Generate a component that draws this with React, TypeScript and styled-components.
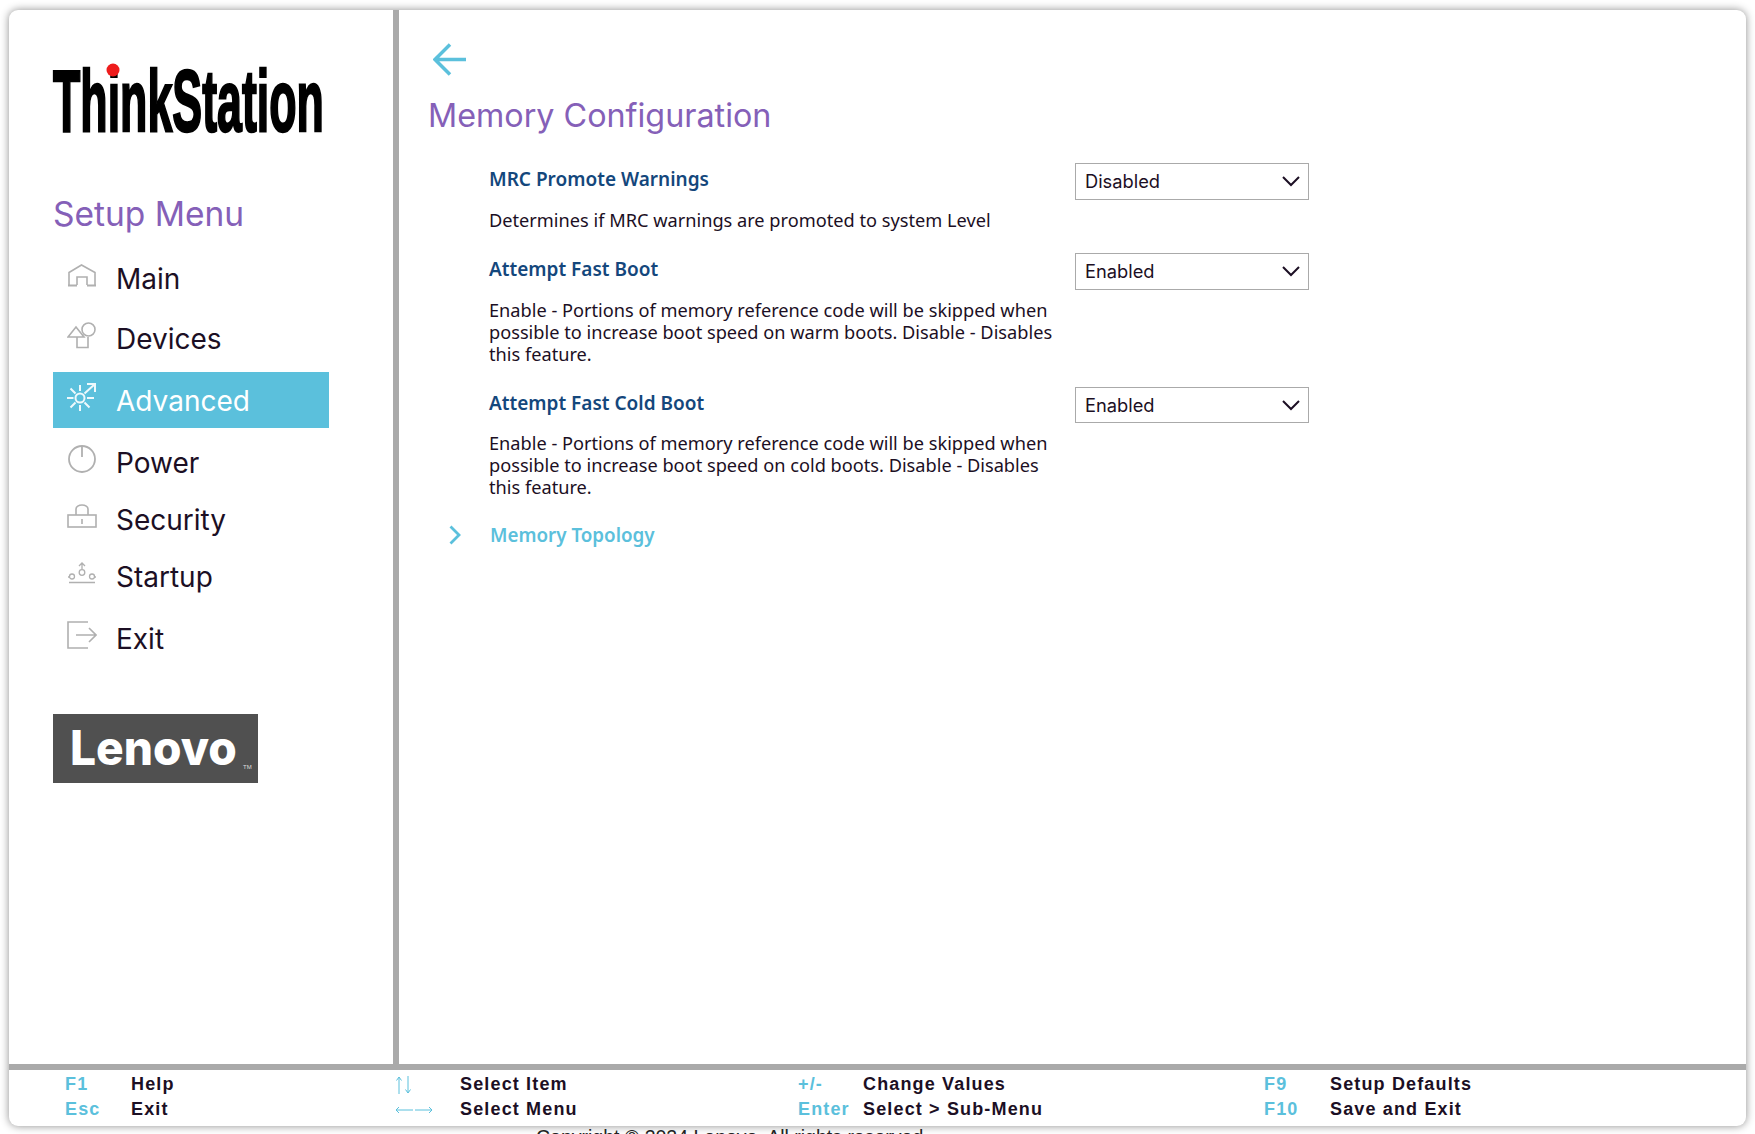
import styled, { createGlobalStyle } from "styled-components";

const Global = createGlobalStyle`
  html, body {
    margin: 0;
    height: 100%;
    overflow: hidden;
    background: #fff;
  }
  * { box-sizing: border-box; }
`;

const Card = styled.div`
  margin: 10px 9px 0;
  width: 1737px;
  height: 1116px;
  background: #fff;
  border-radius: 9px;
  box-shadow: 0 0 9px rgba(0, 0, 0, 0.45);
  display: flex;
  flex-direction: column;
  overflow: hidden;
`;

const Top = styled.div`
  flex: 1;
  display: flex;
  min-height: 0;
`;

const Sidebar = styled.aside`
  width: 390px;
  flex: none;
  border-right: 6px solid #aaa;
  padding: 54px 0 0 44px;
`;

const LogoBox = styled.div`
  height: 72px;
  svg { display: block; overflow: visible; }
`;

const MenuTitle = styled.h2`
  margin: 60px 0 18px 0;
  height: 36px;
  font: 400 33.500px/36px Inter, sans-serif;
  color: #8560b8;
`;

const MenuRow = styled.div<{ $active?: boolean; $gap: number }>`
  width: 276px;
  height: 56px;
  margin-top: ${(p) => p.$gap}px;
  padding: 2px 0 0 14px;
  display: flex;
  align-items: center;
  gap: 19px;
  background: ${(p) => (p.$active ? "#5bc0dc" : "transparent")};
  color: ${(p) => (p.$active ? "#fff" : "#1c0f24")};
  font: 400 28px/1 Inter, sans-serif;
  svg { flex: none; margin-bottom: 8px; }
`;

const LenovoBox = styled.div`
  margin-top: 48px;
  svg { display: block; }
`;

const Main = styled.main`
  flex: 1;
  padding: 33px 0 0 29px;
`;

const Back = styled.div`
  height: 34px;
  padding-left: 5px;
  svg { display: block; }
`;

const Title = styled.h1`
  margin: 21px 0 33px;
  height: 36px;
  font: 400 32.300px/36px Inter, sans-serif;
  color: #8560b8;
`;

const Settings = styled.div`
  padding-left: 61px;
`;

const Setting = styled.div<{ $gap: number }>`
  display: grid;
  grid-template-columns: 586px 234px;
  margin-top: ${(p) => p.$gap}px;
`;

const Label = styled.div<{ $height: number }>`
  font: 600 19px/24px "Noto Sans", sans-serif;
  color: #14477c;
  height: ${(p) => p.$height}px;
`;

const Desc = styled.div`
  font: 400 18.200px/22px "Noto Sans", sans-serif;
  color: #1c0f24;
  padding-top: 2px;
`;

const SelectBox = styled.div<{ $height: number }>`
  height: ${(p) => p.$height}px;
  margin-top: -4px;
  border: 1px solid #aaa;
  padding: 0 8px 0 9px;
  display: flex;
  align-items: center;
  justify-content: space-between;
  font: 400 18.300px/1 Inter, sans-serif;
  color: #1c0f24;
`;

const TopologyRow = styled.div`
  display: flex;
  align-items: center;
  margin-top: 25px;
  margin-left: -40px;
  gap: 29px;
  font: 600 18.800px/24px "Noto Sans", sans-serif;
  color: #5bc0dc;
`;

const Footer = styled.footer`
  flex: none;
  height: 62px;
  border-top: 6px solid #aaa;
  padding: 2px 0 0 56px;
  display: grid;
  grid-template-columns: 66px 264px 65px 338px 65px 401px 66px 1fr;
  grid-auto-rows: 25px;
  align-items: center;
  font: 700 18px/25px "Liberation Sans", sans-serif;
  letter-spacing: 1.150px;
`;

const Key = styled.span`
  color: #5bc0dc;
  display: flex;
  align-items: center;
`;

const Action = styled.span`
  color: #1c0f24;
  white-space: nowrap;
`;

const Copyright = styled.div`
  margin: 0 0 0 536px;
  font: 400 19.500px/22px "Liberation Sans", sans-serif;
  color: #222;
  white-space: nowrap;
`;

const IconLine = {
  fill: "none",
  stroke: "#b0b0b0",
  strokeWidth: 1.6,
} as const;

const HomeIcon = () => (
  <svg width="30" height="24" viewBox="0 0 30 24" {...IconLine}>
    <path d="M2 22V9.500L14.500 2 28 9.500V22" />
    <path d="M10 22v-8h10v8" />
    <path d="M1 22.500h9M20 22.500h9" strokeWidth="2" />
  </svg>
);

const DevicesIcon = () => (
  <svg width="30" height="27" viewBox="0 0 30 27" {...IconLine}>
    <path d="M1 15 9 5l8 10z" />
    <circle cx="21.500" cy="7.500" r="6.500" />
    <path d="M10 15v10.500h11V15" />
  </svg>
);

const AdvancedIcon = () => (
  <svg width="30" height="28" viewBox="0 0 30 28" fill="none" stroke="#eef9fc" strokeWidth="2">
    <circle cx="13" cy="15" r="4.500" />
    <path d="M13 2v6M13 22v6M0 15h6.500M20 15h7M3.500 5.500 8.500 10.500M17.500 19.500l5 5M3.500 24.500l5-5M17.500 10.500 28 1M20 1h8v8" />
  </svg>
);

const PowerIcon = () => (
  <svg width="30" height="28" viewBox="0 0 30 28" {...IconLine} strokeWidth="1.800">
    <circle cx="15" cy="14" r="13" />
    <path d="M15 1v11" />
  </svg>
);

const SecurityIcon = () => (
  <svg width="30" height="24" viewBox="0 0 30 24" {...IconLine}>
    <rect x="1" y="11" width="28" height="12" />
    <path d="M9 11V5a6 4 0 0 1 12 0v6M15 15v5" />
  </svg>
);

const StartupIcon = () => (
  <svg width="30" height="22" viewBox="0 0 30 22" {...IconLine} strokeWidth="1.300">
    <circle cx="15" cy="10.500" r="2.800" />
    <circle cx="5" cy="14.500" r="2.500" />
    <circle cx="25" cy="14.500" r="2.500" />
    <path d="M15 7V1M12 4l3-3 3 3M2 20.500h26" />
    <path d="M1 15h1.500M27.500 15H29" />
  </svg>
);

const ExitIcon = () => (
  <svg width="30" height="28" viewBox="0 0 30 28" {...IconLine}>
    <path d="M21 1H1v26h20" />
    <path d="M9 14h20M22 7l7 7-7 7" />
  </svg>
);

const Chevron = () => (
  <svg width="18" height="11" viewBox="0 0 18 11" fill="none" stroke="#1c0f24" strokeWidth="2">
    <path d="M1 1l8 8 8-8" />
  </svg>
);

const menu = [
  { name: "Main", icon: <HomeIcon />, gap: 0 },
  { name: "Devices", icon: <DevicesIcon />, gap: 4 },
  { name: "Advanced", icon: <AdvancedIcon />, gap: 6, active: true },
  { name: "Power", icon: <PowerIcon />, gap: 6 },
  { name: "Security", icon: <SecurityIcon />, gap: 1 },
  { name: "Startup", icon: <StartupIcon />, gap: 1 },
  { name: "Exit", icon: <ExitIcon />, gap: 6 },
];

const settings = [
  {
    label: "MRC Promote Warnings",
    value: "Disabled",
    gap: 0,
    labelHeight: 40,
    selectHeight: 37,
    lines: ["Determines if MRC warnings are promoted to system Level"],
  },
  {
    label: "Attempt Fast Boot",
    value: "Enabled",
    gap: 26,
    labelHeight: 40,
    selectHeight: 37,
    lines: [
      "Enable - Portions of memory reference code will be skipped when",
      "possible to increase boot speed on warm boots. Disable - Disables",
      "this feature.",
    ],
  },
  {
    label: "Attempt Fast Cold Boot",
    value: "Enabled",
    gap: 26,
    labelHeight: 39,
    selectHeight: 36,
    lines: [
      "Enable - Portions of memory reference code will be skipped when",
      "possible to increase boot speed on cold boots. Disable - Disables",
      "this feature.",
    ],
  },
];

function App() {
  return (
    <>
      <Global />
      <Card>
        <Top>
          <Sidebar>
            <LogoBox>
              <svg width="276" height="72" viewBox="0 0 276 72">
                <text
                  transform="translate(0 67) scale(0.5085 1)"
                  fontFamily="'Liberation Sans', sans-serif"
                  fontWeight="700"
                  fontSize="88"
                  stroke="#000"
                  strokeWidth="2"
                  vectorEffect="non-scaling-stroke"
                >
                  ThinkStation
                </text>
                <circle cx="60" cy="6" r="6.500" fill="#ee1c1c" />
              </svg>
            </LogoBox>
            <MenuTitle>Setup Menu</MenuTitle>
            {menu.map((m) => (
              <MenuRow key={m.name} $active={m.active} $gap={m.gap}>
                {m.icon}
                <span>{m.name}</span>
              </MenuRow>
            ))}
            <LenovoBox>
              <svg width="205" height="69" viewBox="0 0 205 69">
                <rect width="205" height="69" fill="#505050" />
                <text
                  transform="translate(17 51) scale(0.96 1)"
                  fill="#fff"
                  fontFamily="Inter, sans-serif"
                  fontWeight="800"
                  fontSize="48"
                >
                  Lenovo
                </text>
                <text x="190" y="55" fill="#ddd" fontFamily="'Liberation Sans', sans-serif" fontSize="6">
                  TM
                </text>
              </svg>
            </LenovoBox>
          </Sidebar>
          <Main>
            <Back>
              <svg width="34" height="34" viewBox="0 0 34 34" fill="none" stroke="#5bc0dc" strokeWidth="3.500">
                <path d="M33 16.500H3M17 1.500 2 16.500l15 15" />
              </svg>
            </Back>
            <Title>Memory Configuration</Title>
            <Settings>
              {settings.map((s) => (
                <Setting key={s.label} $gap={s.gap}>
                  <div>
                    <Label $height={s.labelHeight}>{s.label}</Label>
                    <Desc>
                      {s.lines.map((l) => (
                        <div key={l}>{l}</div>
                      ))}
                    </Desc>
                  </div>
                  <SelectBox $height={s.selectHeight}>
                    {s.value}
                    <Chevron />
                  </SelectBox>
                </Setting>
              ))}
              <TopologyRow>
                <svg width="12" height="20" viewBox="0 0 12 20" fill="none" stroke="#5bc0dc" strokeWidth="2.800">
                  <path d="M1.500 1.500 10 10l-8.500 8.500" />
                </svg>
                Memory Topology
              </TopologyRow>
            </Settings>
          </Main>
        </Top>
        <Footer>
          <Key>F1</Key>
          <Action>Help</Action>
          <Key>
            <svg width="20" height="20" viewBox="0 0 20 20" fill="none" stroke="#5bc0dc" strokeWidth="1">
              <path d="M4 19V2M1.500 5.500 4 2l2.500 3.500M13 1v17M10.500 14.500 13 18l2.500-3.500" />
            </svg>
          </Key>
          <Action>Select Item</Action>
          <Key>+/-</Key>
          <Action>Change Values</Action>
          <Key>F9</Key>
          <Action>Setup Defaults</Action>
          <Key>Esc</Key>
          <Action>Exit</Action>
          <Key>
            <svg width="38" height="10" viewBox="0 0 38 10" fill="none" stroke="#5bc0dc" strokeWidth="1">
              <path d="M18 5H1M4 2 1 5l3 3M20 5h17M34 2l3 3-3 3" />
            </svg>
          </Key>
          <Action>Select Menu</Action>
          <Key>Enter</Key>
          <Action>Select &gt; Sub-Menu</Action>
          <Key>F10</Key>
          <Action>Save and Exit</Action>
        </Footer>
      </Card>
      <Copyright>Copyright © 2024 Lenovo. All rights reserved.</Copyright>
    </>
  );
}

export default App;
